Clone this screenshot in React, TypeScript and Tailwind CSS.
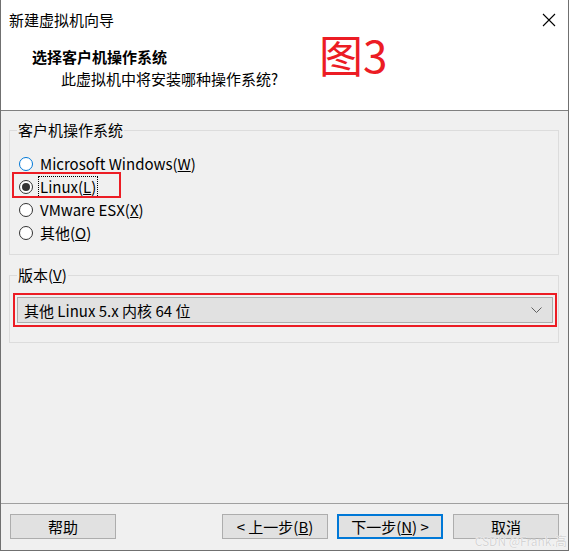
import React from "react";

const font = { fontFamily: '"Noto Sans CJK SC", "Noto Sans", sans-serif' };

function Radio({ checked, hover }: { checked?: boolean; hover?: boolean }) {
    return (
        <span
            className={
                "w-[14px] h-[14px] rounded-full bg-white border flex items-center justify-center shrink-0 " +
                (hover ? "border-[#0078d7]" : "border-[#333333]")
            }
        >
            {checked && <span className="w-[8px] h-[8px] rounded-full bg-[#333333]" />}
        </span>
    );
}

function Button({ children, focused }: { children: React.ReactNode; focused?: boolean }) {
    return (
        <button
            className={
                "w-[106px] h-[25px] bg-[#e1e1e1] flex items-center justify-center text-[15px] text-black leading-none " +
                (focused ? "border-2 border-[#0078d7]" : "border border-[#adadad]")
            }
        >
            {children}
        </button>
    );
}

export default function App() {
    return (
        <div className="w-[570px] h-[551px] bg-white" style={font}>
            <div className="w-[569px] h-[551px] flex flex-col border-l border-r border-b border-[#707070]">
                {/* header */}
                <div className="relative h-[111px] bg-white border-b border-[#808080] shrink-0">
                    <div className="h-[40px] flex items-center justify-between pl-[8px] pr-[12px]">
                        <span className="text-[15px] text-black leading-[20px]">新建虚拟机向导</span>
                        <svg width="14" height="14" viewBox="0 0 14 14">
                            <path d="M1 1 L13 13 M13 1 L1 13" stroke="#000" strokeWidth="1.1" />
                        </svg>
                    </div>
                    <div className="pl-[31px] mt-[7px] text-[15px] font-bold leading-[20px] text-black">选择客户机操作系统</div>
                    <div className="pl-[60px] mt-[2px] text-[15px] leading-[20px] text-black">此虚拟机中将安装哪种操作系统?</div>
                    <div className="absolute left-[318px] top-[32px] text-[44px] leading-none text-[#ec1c24]">图3</div>
                </div>

                {/* body */}
                <div className="relative flex-1 flex flex-col bg-[#f0f0f0]">
                    <div className="pl-[8px] pr-[9px]">
                        <fieldset className="mt-[9px] border border-[#dcdcdc] pb-[10px]">
                            <legend className="ml-[7px] px-[1px] text-[15px] leading-[20px] text-black">客户机操作系统</legend>
                            <div className="pt-[12px] pl-[9px] text-[15px] text-black">
                                <div className="h-[23px] flex items-center gap-[5px]">
                                    <Radio hover />
                                    <span className="border border-transparent px-[1px] leading-[20px]">
                                        Microsoft Windows(<u>W</u>)
                                    </span>
                                </div>
                                <div className="relative h-[23px] flex items-center gap-[5px]">
                                    <div className="absolute left-[-7px] top-[-3px] w-[109px] h-[26px] border-2 border-[#ec1c24]" />
                                    <Radio checked />
                                    <span className="border border-dotted border-black px-[1px] leading-[20px]">
                                        Linux(<u>L</u>)
                                    </span>
                                </div>
                                <div className="h-[23px] flex items-center gap-[5px]">
                                    <Radio />
                                    <span className="border border-transparent px-[1px] leading-[20px]">
                                        VMware ESX(<u>X</u>)
                                    </span>
                                </div>
                                <div className="h-[23px] flex items-center gap-[5px]">
                                    <Radio />
                                    <span className="border border-transparent px-[1px] leading-[20px]">
                                        其他(<u>O</u>)
                                    </span>
                                </div>
                            </div>
                        </fieldset>

                        <fieldset className="mt-[10px] border border-[#dcdcdc] pb-[15px]">
                            <legend className="ml-[7px] px-[1px] text-[15px] leading-[20px] text-black">
                                版本(<u>V</u>)
                            </legend>
                            <div className="mt-[8px] ml-[3px] mr-[1px] h-[34px] border-2 border-[#ec1c24] p-[2px]">
                                <div className="h-full bg-[#e1e1e1] border border-[#adadad] flex items-center justify-between pl-[6px] pr-[10px]">
                                    <span className="text-[15px] text-black leading-none">其他 Linux 5.x 内核 64 位</span>
                                    <svg width="11" height="7" viewBox="0 0 11 7">
                                        <path d="M0.5 0.5 L5.5 5.5 L10.5 0.5" stroke="#606060" strokeWidth="1" fill="none" />
                                    </svg>
                                </div>
                            </div>
                        </fieldset>
                    </div>

                    <div className="flex-1" />

                    <div className="border-t border-[#a0a0a0] pt-[10px] pb-[11px] pl-[9px] pr-[9px] flex justify-between">
                        <Button>帮助</Button>
                        <div className="flex">
                            <Button>
                                &lt; 上一步(<u>B</u>)
                            </Button>
                            <div className="w-[9px]" />
                            <Button focused>
                                下一步(<u>N</u>) &gt;
                            </Button>
                            <div className="w-[10px]" />
                            <Button>取消</Button>
                        </div>
                    </div>

                    <div
                        className="absolute right-[1px] bottom-[3px] text-[12px] leading-none text-[#d4d4d4]"
                        style={{ textShadow: "0 0 1px #fff, 0 0 1px #fff" }}
                    >
                        CSDN @Frank.高
                    </div>
                </div>
            </div>
        </div>
    );
}
